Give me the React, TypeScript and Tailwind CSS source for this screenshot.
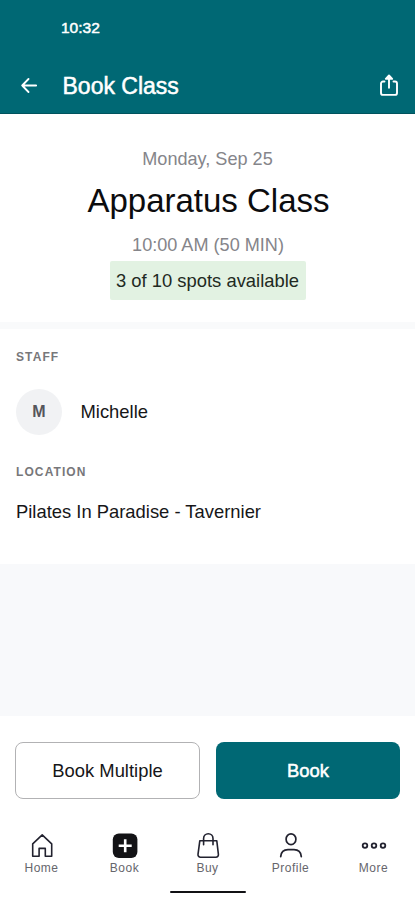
import type { ReactNode } from "react";

const navItems: { label: string; icon: ReactNode }[] = [
  {
    label: "Home",
    icon: (
      <svg className="w-7 h-7" viewBox="0 0 28 28" fill="none" stroke="#22222f" strokeWidth="1.6" strokeLinejoin="round">
        <path d="M4.7 12.8 14.2 3.8l9.5 9v12.4h-6.4v-7.8h-6.2v7.8H4.700z" />
      </svg>
    ),
  },
  {
    label: "Book",
    icon: (
      <svg className="w-7 h-7" viewBox="0 0 28 28" fill="none">
        <rect x="1.8" y="2.400" width="24.600" height="24.600" rx="6" fill="#131316" />
        <path d="M14.200 8.200v13M7.700 14.700h13" stroke="white" strokeWidth="2.600" />
      </svg>
    ),
  },
  {
    label: "Buy",
    icon: (
      <svg className="w-7 h-7" viewBox="0 0 28 28" fill="none" stroke="#22222f" strokeWidth="1.6" strokeLinecap="round" strokeLinejoin="round">
        <path d="M5.8 9.800h17l1.600 13.600a2.500 2.500 0 0 1-2.500 2.800H6.500a2.500 2.500 0 0 1-2.500-2.800z" />
        <path d="M9.600 13.800V7.500a4.700 4.800 0 0 1 9.400 0v6.300" />
      </svg>
    ),
  },
  {
    label: "Profile",
    icon: (
      <svg className="w-7 h-7" viewBox="0 0 28 28" fill="none" stroke="#22222f" strokeWidth="1.700" strokeLinecap="round">
        <ellipse cx="14" cy="8.200" rx="4.900" ry="5.400" />
        <path d="M3.700 25.600c.4-4.700 3.600-6.900 7.300-6.900h6c3.700 0 6.900 2.200 7.300 6.900" />
      </svg>
    ),
  },
  {
    label: "More",
    icon: (
      <svg className="w-7 h-7" viewBox="0 0 28 28" fill="none" stroke="#22222f" strokeWidth="1.800">
        <circle cx="5" cy="14.600" r="2.300" />
        <circle cx="14" cy="14.600" r="2.300" />
        <circle cx="23" cy="14.600" r="2.300" />
      </svg>
    ),
  },
];

function Header() {
  return (
    <header className="h-[114px] shrink-0 bg-[#006874] border-b border-[#00535d] text-white">
      <div className="h-14 pl-[61px] text-[15.5px] leading-[56px] [-webkit-text-stroke:0.5px_white]">10:32</div>
      <div className="h-[57px] flex items-center pl-[21px] pr-[17px]">
        <svg className="w-4 h-4" viewBox="0 0 16 16" fill="none" stroke="white" strokeWidth="1.800" strokeLinecap="round" strokeLinejoin="round">
          <path d="M15.200 8.500H1.200M7.500 2 1.200 8.500 7.500 15" />
        </svg>
        <h1 className="ml-[25.5px] mt-0.5 text-[23px] leading-7 [-webkit-text-stroke:0.5px_white]">Book Class</h1>
        <svg className="ml-auto mt-px w-[18px] h-[22px]" viewBox="0 0 18 22" fill="none" stroke="white" strokeWidth="1.900" strokeLinecap="round" strokeLinejoin="round">
          <path d="M4.500 7.500H3A2 2 0 0 0 1 9.500v9.400a2 2 0 0 0 2 2h12a2 2 0 0 0 2-2V9.500a2 2 0 0 0-2-2h-1.500" />
          <path d="M9 13.800V2M5.800 4.800 9 1.500l3.200 3.300z" fill="white" />
        </svg>
      </div>
    </header>
  );
}

export default function App() {
  return (
    <div className="w-full h-[900px] flex flex-col overflow-hidden bg-white text-[#161618] font-['Liberation_Sans',Arial,sans-serif]">
      <Header />

      {/* Class summary */}
      <section className="h-[208px] shrink-0 flex flex-col items-center pt-[33px]">
        <p className="text-[18.1px] leading-6 text-[#85858a]">Monday, Sep 25</p>
        <h2 className="mt-2.5 pl-0.5 text-[33px] leading-10 text-[#0c0c0e]">Apparatus Class</h2>
        <p className="mt-3 pl-px text-[18.1px] leading-6 text-[#85858a]">10:00 AM (50 MIN)</p>
        <div className="mt-1 pt-px w-[196px] h-[39px] flex items-center justify-center rounded-xs bg-[#e2f2e2] text-[18.4px] whitespace-nowrap text-[#1f2a22]">
          3 of 10 spots available
        </div>
      </section>
      <div className="h-[7px] shrink-0 bg-[#f9fafb]" />

      {/* Staff and location */}
      <section className="h-[235px] shrink-0 px-4 pt-5">
        <h3 className="text-[12px] leading-4 font-bold tracking-[1.1px] text-[#77777a]">STAFF</h3>
        <div className="mt-6 flex items-center">
          <div className="w-[46px] h-[46px] rounded-full bg-[#f1f2f4] flex items-center justify-center text-base font-bold text-[#55555b]">
            M
          </div>
          <span className="ml-[18.5px] text-[18.4px]">Michelle</span>
        </div>
        <h3 className="mt-[29px] text-[12px] leading-4 font-bold tracking-[1.1px] text-[#77777a]">LOCATION</h3>
        <p className="mt-5 text-[18.4px] leading-6">Pilates In Paradise - Tavernier</p>
      </section>

      <div className="flex-1 bg-[#f8f9fb]" />

      {/* Actions */}
      <div className="h-[99px] shrink-0 flex gap-4 px-[15px] pt-[26px]">
        <button className="flex-1 h-[57px] rounded-lg border border-[#b2b2b4] text-[18.4px]">Book Multiple</button>
        <button className="w-[184px] h-[57px] rounded-lg bg-[#006874] text-[18.4px] text-white [-webkit-text-stroke:0.5px_white]">
          Book
        </button>
      </div>

      <nav className="h-[85px] shrink-0 flex flex-col items-center pt-4">
        <ul className="w-full flex">
          {navItems.map((item) => (
            <li key={item.label} className="flex-1 flex flex-col items-center">
              {item.icon}
              <span className="mt-px text-[12px] leading-4 tracking-[0.5px] text-[#66666c]">{item.label}</span>
            </li>
          ))}
        </ul>
        <div className="mt-[15px] w-[76px] h-0.5 rounded-full bg-[#111114]" />
      </nav>
    </div>
  );
}
